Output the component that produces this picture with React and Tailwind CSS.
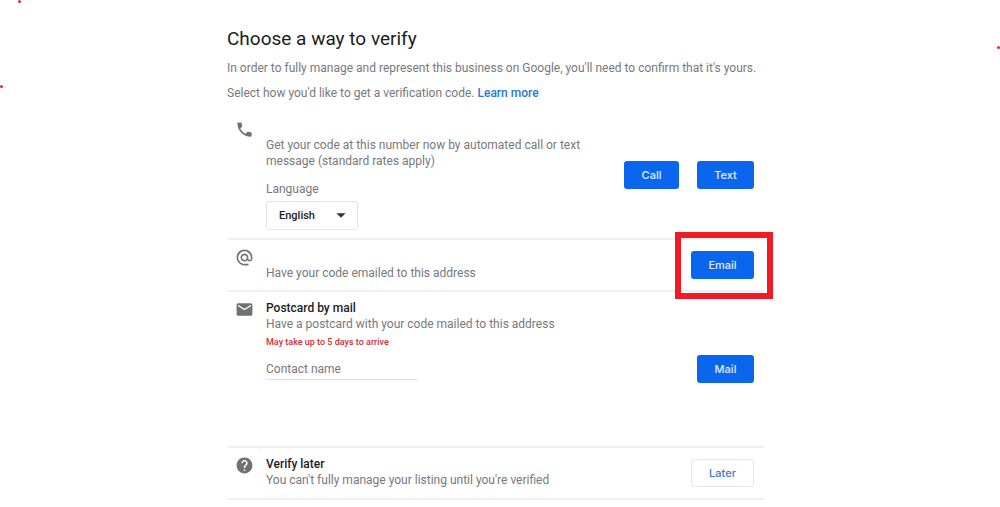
/**
 * App.jsx - Business Verification Page
 * =====================================
 * Lists the ways an owner can receive a verification code:
 * phone, email, postcard, or later.
 */

import React, { useState } from "react";
import { MdPhone, MdAlternateEmail, MdEmail, MdHelp, MdArrowDropDown } from "react-icons/md";

function PrimaryButton({ children, className = "w-[57px]" }) {
  return (
    <button
      type="button"
      className={`h-7 rounded-[3px] bg-[#0b66ee] text-[11px] font-medium text-[#e4eefd] font-['Inter',sans-serif] hover:bg-[#0a5ad4] ${className}`}
    >
      {children}
    </button>
  );
}

// One verification option: icon, text column, actions on the right
function MethodRow({ icon: Icon, actions, className, children }) {
  return (
    <li className={`flex border-b-2 border-[#f0f0f0] pl-2 pr-[10px] ${className}`}>
      <div className="w-[31px] shrink-0 pt-[1px]">
        <Icon size={19} className="text-[#6f7174]" aria-hidden="true" />
      </div>
      <div className="flex-1 pt-[1px]">{children}</div>
      {actions}
    </li>
  );
}

function LanguageSelect() {
  const [language, setLanguage] = useState("en");

  return (
    <div className="mt-3 flex flex-col items-start">
      <label htmlFor="language" className="mb-1">Language</label>
      <div className="relative">
        <select
          id="language"
          value={language}
          onChange={(e) => setLanguage(e.target.value)}
          className="h-[29px] w-[92px] appearance-none rounded-[3px] border border-[#e6e6e6] bg-white pl-3 text-[11px] font-medium text-[#222]"
        >
          <option value="en">English</option>
          <option value="es">Español</option>
          <option value="fr">Français</option>
        </select>
        <MdArrowDropDown
          size={22}
          className="pointer-events-none absolute right-[6px] top-[3px] text-[#333]"
          aria-hidden="true"
        />
      </div>
    </div>
  );
}

export default function App() {
  const [contact, setContact] = useState("");

  return (
    <div className="relative min-h-screen overflow-hidden bg-white font-['Roboto',sans-serif] text-[12px] leading-4 text-[#77797c]">
      {/* Stray marks near the page edges */}
      <span className="absolute left-[18px] top-0 size-[3px] rounded-full bg-[#e8252c]" />
      <span className="absolute left-0 top-[85px] size-[3px] rounded-full bg-[#e8252c]" />
      <span className="absolute right-0 top-[46px] size-[3px] rounded-full bg-[#e8252c]" />

      <main className="mx-auto max-w-[546px] pr-[9px] pt-[27px]">
        <h1 className="text-[19px] leading-6 text-[#1c1c1c]">Choose a way to verify</h1>
        <p className="mt-[9px]">
          In order to fully manage and represent this business on Google, you'll need to confirm that it's yours.
        </p>
        <p className="mt-[9px]">
          Select how you'd like to get a verification code.{" "}
          <a href="#learn-more" className="font-medium text-[#2c74d8]">Learn more</a>
        </p>

        <ul className="mt-[18px]">
          <MethodRow
            icon={MdPhone}
            className="pb-2"
            actions={
              <div className="flex gap-[18px] pt-[42px]">
                <PrimaryButton className="w-[55px]">Call</PrimaryButton>
                <PrimaryButton>Text</PrimaryButton>
              </div>
            }
          >
            <p className="max-w-[330px] pt-[17px]">
              Get your code at this number now by automated call or text message (standard rates apply)
            </p>
            <LanguageSelect />
          </MethodRow>

          <MethodRow
            icon={MdAlternateEmail}
            className="relative pt-[7px] pb-[9px]"
            actions={
              <div className="pt-1">
                <PrimaryButton className="w-[63px]">Email</PrimaryButton>
                {/* Highlight frame around the email option */}
                <span className="pointer-events-none absolute -right-[9px] -top-2 h-[67px] w-[98px] border-[6px] border-[#ee1c25]" />
              </div>
            }
          >
            <p className="pt-[17px]">Have your code emailed to this address</p>
          </MethodRow>

          <MethodRow
            icon={MdEmail}
            className="pt-[7px] pb-[63px]"
            actions={
              <div className="pt-[56px]">
                <PrimaryButton>Mail</PrimaryButton>
              </div>
            }
          >
            <h2 className="font-medium text-[#1c1c1c]">Postcard by mail</h2>
            <p>Have a postcard with your code mailed to this address</p>
            <p className="mt-[2px] text-[9px] font-medium text-[#d0303a]">May take up to 5 days to arrive</p>
            <input
              type="text"
              aria-label="Contact name"
              placeholder="Contact name"
              value={contact}
              onChange={(e) => setContact(e.target.value)}
              className="mt-2 h-[22px] w-[151px] border-b border-[#dedede] outline-none placeholder:text-[#77797c]"
            />
          </MethodRow>

          <MethodRow
            icon={MdHelp}
            className="pt-[7px] pb-[10px]"
            actions={
              <div className="pt-1">
                <button
                  type="button"
                  className="h-7 w-[63px] rounded-[3px] border border-[#e6e6e6] bg-white text-[11px] font-medium text-[#3a78d0] font-['Inter',sans-serif]"
                >
                  Later
                </button>
              </div>
            }
          >
            <h2 className="font-medium text-[#1c1c1c]">Verify later</h2>
            <p>You can't fully manage your listing until you're verified</p>
          </MethodRow>
        </ul>
      </main>
    </div>
  );
}
